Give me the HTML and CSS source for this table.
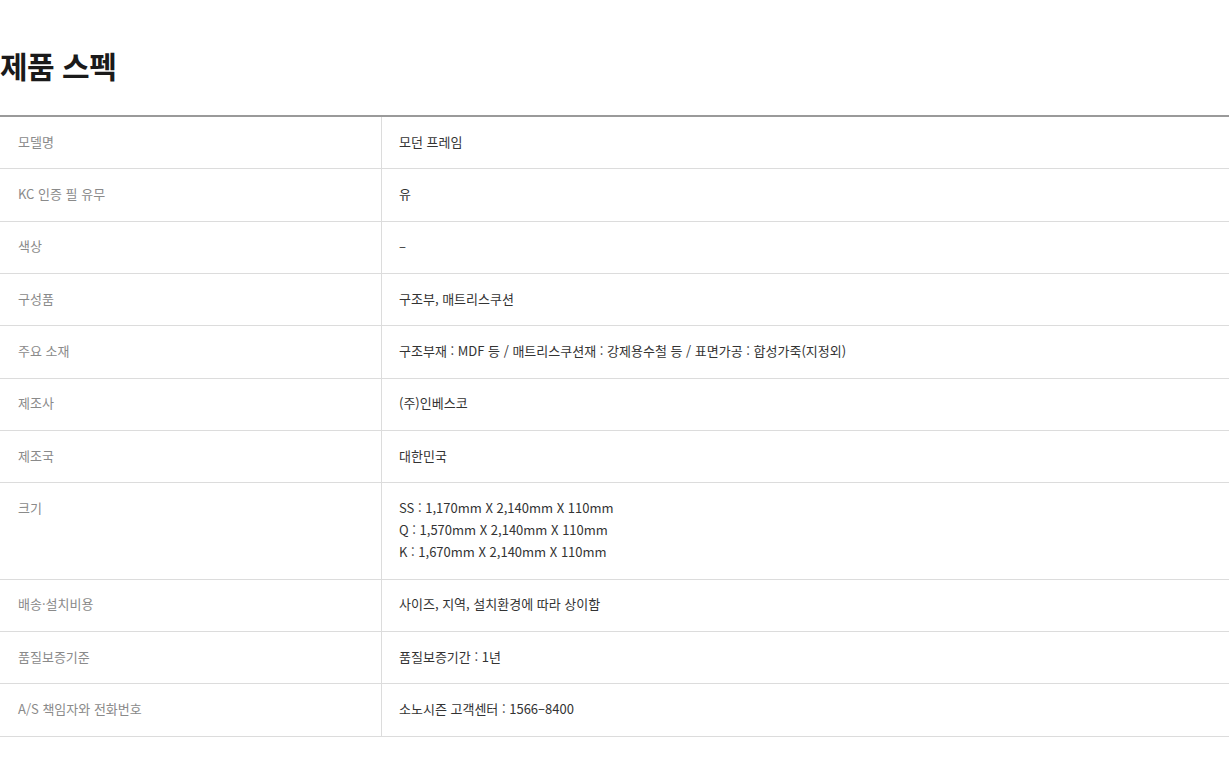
FILE: index.html
```html
<!DOCTYPE html>
<html lang="ko">
<head>
<meta charset="utf-8">
<title>제품 스펙</title>
<link rel="stylesheet" href="styles.css">
</head>
<body>
<section class="spec">
  <h2 class="spec-title">제품 스펙</h2>
  <table class="spec-table">
    <tbody>
      <tr><th>모델명</th><td>모던 프레임</td></tr>
      <tr><th>KC 인증 필 유무</th><td>유</td></tr>
      <tr><th>색상</th><td>–</td></tr>
      <tr><th>구성품</th><td>구조부, 매트리스쿠션</td></tr>
      <tr><th>주요 소재</th><td>구조부재 : MDF 등 / 매트리스쿠션재 : 강제용수철 등 / 표면가공 : 합성가죽(지정외)</td></tr>
      <tr><th>제조사</th><td>(주)인베스코</td></tr>
      <tr><th>제조국</th><td>대한민국</td></tr>
      <tr><th>크기</th><td>SS : 1,170mm X 2,140mm X 110mm<br>Q : 1,570mm X 2,140mm X 110mm<br>K : 1,670mm X 2,140mm X 110mm</td></tr>
      <tr><th>배송·설치비용</th><td>사이즈, 지역, 설치환경에 따라 상이함</td></tr>
      <tr><th>품질보증기준</th><td>품질보증기간 : 1년</td></tr>
      <tr><th>A/S 책임자와 전화번호</th><td>소노시즌 고객센터 : 1566–8400</td></tr>
    </tbody>
  </table>
</section>
</body>
</html>
```
FILE: styles.css
```css
html, body {
  margin: 0;
  padding: 0;
  background: #fff;
}
body {
  font-family: "Noto Sans CJK KR", "Noto Sans", sans-serif;
  color: #333;
}
.spec {
  width: 1229px;
  padding-top: 40px;
}
.spec-title {
  margin: 0 0 25px 0;
  font-size: 30px;
  line-height: 50px;
  font-weight: 700;
  color: #1a1a1a;
  letter-spacing: -0.5px;
}
.spec-table {
  width: 100%;
  border-collapse: collapse;
  border-top: 2px solid #9a9a9a;
  font-size: 13px;
  line-height: 22px;
}
.spec-table th,
.spec-table td {
  padding: 13.5px 18px 15.85px 18px;
  border-bottom: 1px solid #dcdcdc;
  vertical-align: top;
  text-align: left;
  font-weight: 400;
}
.spec-table th {
  width: 345px;
  color: #8a8a8a;
  border-right: 1px solid #dcdcdc;
}
.spec-table td {
  color: #333;
  padding-left: 17px;
}
```
